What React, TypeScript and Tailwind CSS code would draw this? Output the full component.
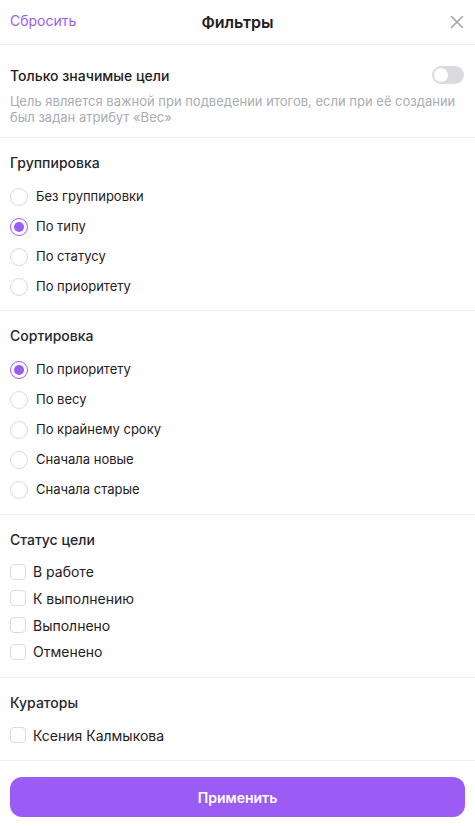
import React from "react";

const font = { fontFamily: "Inter, 'Noto Sans', sans-serif" };

function Radio({ checked, label }: { checked?: boolean; label: string }) {
  return (
    <div className="flex items-center h-[30px]">
      <div
        className={
          checked
            ? "w-[18px] h-[18px] rounded-full border-[1.5px] border-[#9b5cf5] flex items-center justify-center"
            : "w-[18px] h-[18px] rounded-full border border-[#d9dbe0]"
        }
      >
        {checked && <div className="w-[10px] h-[10px] rounded-full bg-[#9b5cf5]" />}
      </div>
      <span className="ml-[8px] text-[13px] text-[#1f2024]">{label}</span>
    </div>
  );
}

function Check({ label }: { label: string }) {
  return (
    <div className="flex items-center h-[26.67px]">
      <div className="w-[16px] h-[16px] rounded-[4px] border border-[#d9dbe0]" />
      <span className="ml-[7px] text-[14px] text-[#1f2024]">{label}</span>
    </div>
  );
}

function Title({ children }: { children: React.ReactNode }) {
  return <div className="text-[14px] font-medium text-[#26272b] h-[22px] flex items-center">{children}</div>;
}

export default function App() {
  return (
    <div className="w-[475px] h-[826px] bg-white flex flex-col" style={font}>
      <div className="h-[45px] flex items-center justify-between px-[10px] border-b border-[#eeeff1] relative">
        <span className="text-[14px] text-[#9b5cf5] -mt-[3px]">Сбросить</span>
        <span className="absolute left-1/2 -translate-x-1/2 text-[16px] font-semibold text-[#1f2024]">Фильтры</span>
        <svg width="14" height="14" viewBox="0 0 14 14" className="mr-[1px]">
          <path d="M1.5 1.5 L12.5 12.5 M12.5 1.5 L1.5 12.5" stroke="#9da1aa" strokeWidth="1.5" strokeLinecap="round" />
        </svg>
      </div>

      <div className="px-[10px] pt-[19px] pb-[12px] border-b border-[#eeeff1]">
        <div className="flex items-center justify-between h-[22px]">
          <span className="text-[14px] font-medium text-[#1f2024]">Только значимые цели</span>
          <div className="w-[32px] h-[18px] rounded-full bg-[#d9dbe0] p-[2px] mr-[1px]">
            <div className="w-[14px] h-[14px] rounded-full bg-white" />
          </div>
        </div>
        <p className="mt-[7px] text-[13px] leading-[16px] text-[#a9acb3]">
          Цель является важной при подведении итогов, если при её создании был задан атрибут «Вес»
        </p>
      </div>

      <div className="px-[10px] pt-[13px] pb-[8px] border-b border-[#eeeff1]">
        <Title>Группировка</Title>
        <div className="mt-[9px]">
          <Radio label="Без группировки" />
          <Radio label="По типу" checked />
          <Radio label="По статусу" />
          <Radio label="По приоритету" />
        </div>
      </div>

      <div className="px-[10px] pt-[13px] pb-[9px] border-b border-[#eeeff1]">
        <Title>Сортировка</Title>
        <div className="mt-[9px]">
          <Radio label="По приоритету" checked />
          <Radio label="По весу" />
          <Radio label="По крайнему сроку" />
          <Radio label="Сначала новые" />
          <Radio label="Сначала старые" />
        </div>
      </div>

      <div className="px-[10px] pt-[13px] pb-[11.5px] border-b border-[#eeeff1]">
        <Title>Статус цели</Title>
        <div className="mt-[8.5px]">
          <Check label="В работе" />
          <Check label="К выполнению" />
          <Check label="Выполнено" />
          <Check label="Отменено" />
        </div>
      </div>

      <div className="px-[10px] pt-[14px] pb-[11.5px] border-b border-[#eeeff1]">
        <Title>Кураторы</Title>
        <div className="mt-[8.5px]">
          <Check label="Ксения Калмыкова" />
        </div>
      </div>

      <div className="px-[10px] pt-[16px]">
        <button className="w-full h-[40px] rounded-[12px] bg-[#9b5cf5] text-white text-[14px] font-semibold">
          Применить
        </button>
      </div>
    </div>
  );
}
